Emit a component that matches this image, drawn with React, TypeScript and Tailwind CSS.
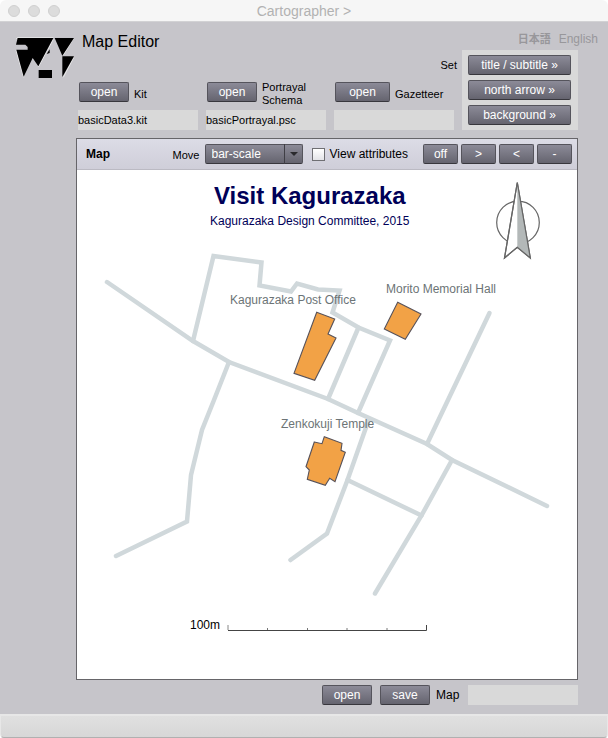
import React from "react";

const ROADS = [
  "M107 282 L193 341 L229 362 L328 399 L358 413 L427 444 L452 460 L547 506",
  "M193 341 L213.5 256 L261.5 262.5 L259.5 285.5 L291 291.5 L297 283.5 L318 289.5 L339.5 290.5 L332.5 312.5 L358.5 327.5 L390 340.5 L358 413",
  "M358.5 327.5 L328 399",
  "M489.5 313 L427 444",
  "M229 362 L214 400 L202 430 L191 475 L187 521.5 L116 556",
  "M369 419 L347.5 480 L327 533.5 L290.5 560",
  "M347.5 480 L421.5 515.5",
  "M452 460 L421.5 515.5 L375 593.5",
];

const BUILDINGS = [
  "316.7,312.3 334.7,319 328,334 336,338 314.7,380.3 294,373.3",
  "397.7,302.3 421,314 405.3,339.3 384.3,329",
  "314.3,442 322,443.7 324.3,436.7 342,443.3 341,450.3 345.3,452.3 335,481.7 329.7,478.3 325.3,485.3 307.3,479.3 309.3,470 306,466.7",
];

function Button({ className = "", children }: { className?: string; children: React.ReactNode }) {
  return (
    <button
      type="button"
      className={`h-5 shrink-0 rounded-xs border border-[#55545c] border-b-[#38373d] bg-linear-to-b from-[#8c8b98] to-[#65646f] text-center text-xs leading-4 text-white ${className}`}
    >
      {children}
    </button>
  );
}

function FileField({ id, label, value, wide }: { id: string; label: React.ReactNode; value: string; wide?: boolean }) {
  return (
    <div>
      <div className="flex h-7 items-start gap-[5px] pl-[1px]">
        <Button className={wide ? "w-[55px]" : "w-[50px]"}>open</Button>
        <label htmlFor={id} className="flex h-[24px] items-center text-[11px] leading-[13px]">
          {label}
        </label>
      </div>
      <input id={id} type="text" defaultValue={value} className="block h-5 w-full bg-[#d9d9d9] text-[11px] outline-none" />
    </div>
  );
}

function Logo() {
  return (
    <svg viewBox="45 112 183 126" className="w-[61px]" role="img" aria-label="Cartographer">
      <path d="M48 118L54 113H160M48 151L71 233M115 202L160 119M221 116L190 166M221 174L190 233" fill="none" stroke="#eee" strokeWidth="2.5" />
      <path d="M53 115H160L115 200L98 175L71 231L49 150H83V142L76 135H48Z" />
      <path d="M164 115H222L187 168ZM187 170H222L187 232ZM116 211H156V235H116ZM140 163L149 149V160Z" />
    </svg>
  );
}

function MapCanvas() {
  return (
    <svg viewBox="77 170 500 509" className="block w-full bg-white" fontFamily="Liberation Sans, Arial, sans-serif">
      <g fill="none" stroke="#d0d8db" strokeWidth="4.5" strokeLinecap="round" strokeLinejoin="miter">
        {ROADS.map((d) => (
          <path key={d} d={d} />
        ))}
      </g>
      <g fill="#f2a246" stroke="#57525a" strokeWidth="1.1">
        {BUILDINGS.map((points) => (
          <polygon key={points} points={points} />
        ))}
      </g>
      <g fill="#6c7476" fontSize="12">
        <text x="230" y="304">Kagurazaka Post Office</text>
        <text x="386" y="293">Morito Memorial Hall</text>
        <text x="281" y="428">Zenkokuji Temple</text>
      </g>
      <g fill="#000058">
        <text x="214" y="204" fontSize="24" fontWeight="bold">Visit Kagurazaka</text>
        <text x="210" y="225" fontSize="12">Kagurazaka Design Committee, 2015</text>
      </g>
      <g stroke="#666" strokeWidth="1.2">
        <circle cx="518" cy="222.5" r="21.3" fill="none" />
        <path d="M517.3 182.5L504.5 258L517.3 247.3L530.3 258Z" fill="#fff" />
        <path d="M517.3 182.5V247.3L530.3 258Z" fill="#b3b8b8" stroke="none" />
        <path d="M517.3 182.5L504.5 258L517.3 247.3L530.3 258Z" fill="none" />
      </g>
      <text x="190" y="629" fontSize="12">100m</text>
      <g fill="none" stroke="#444">
        <path d="M228 630.5H426.5V625" />
        <path d="M228 625V630" stroke="#888" />
        <path d="M267.5 628V630M307.5 628V630M347 628V630M387 628V630" stroke="#777" />
      </g>
    </svg>
  );
}

export default function App() {
  return (
    <div className="flex min-h-screen w-full flex-col bg-white font-['Liberation_Sans',Arial,'Noto_Sans_CJK_JP',sans-serif] text-xs text-black">
      <header className="relative flex h-[22px] items-center justify-center rounded-t-md border-b border-[#d2d2d4] bg-[#f6f6f6]">
        <div className="absolute left-2 flex gap-2">
          <span className="size-3 rounded-full border border-[#d0d0d0] bg-[#dcdcdc]" />
          <span className="size-3 rounded-full border border-[#d0d0d0] bg-[#dcdcdc]" />
          <span className="size-3 rounded-full border border-[#d0d0d0] bg-[#dcdcdc]" />
        </div>
        <h1 className="text-sm text-[#b2b2b2]">Cartographer &gt;</h1>
      </header>

      <div className="flex flex-1 bg-[#c6c5ca]">
        <aside className="w-[76px] shrink-0 pt-[15px] pl-[15px]">
          <Logo />
        </aside>

        <main className="min-w-0 flex-1">
          <div className="flex h-7 justify-between pt-2 pr-[10px] pl-[6px]">
            <h2 className="text-base leading-6">Map Editor</h2>
            <nav className="flex gap-2 leading-[18px] text-[#98979b]">
              <a href="#ja" className="text-[11px] font-bold">日本語</a>
              <a href="#en">English</a>
            </nav>
          </div>

          <div className="flex gap-2 pr-[30px]">
            <div className="flex min-w-0 flex-1 flex-col justify-between pl-[2px]">
              <p className="-mr-[3px] h-[32px] pt-2 text-right text-[11px] leading-[14px]">Set</p>
              <div className="grid grid-cols-3 gap-2">
                <FileField id="kit" label="Kit" value="basicData3.kit" />
                <FileField id="schema" label={<>Portrayal<br />Schema</>} value="basicPortrayal.psc" />
                <FileField id="gazetteer" label="Gazetteer" value="" wide />
              </div>
            </div>
            <div className="flex w-[116px] shrink-0 flex-col gap-[5px] bg-[#d9d9d9] py-[5px] pr-[7px] pl-[6px]">
              <Button>title / subtitle »</Button>
              <Button>north arrow »</Button>
              <Button>background »</Button>
            </div>
          </div>

          <div className="pr-[30px]">
            <section className="mt-2 border border-[#666569]">
              <div className="flex h-[31px] items-center border-b border-[#bbbac3] bg-linear-to-b from-[#dcdce6] to-[#cfced9] pr-[5px] pl-[9px]">
                <h3 className="font-bold">Map</h3>
                <div className="mr-[15px] ml-auto flex items-center">
                  <label htmlFor="move" className="mr-[5px] pt-[2px] text-[11px]">Move</label>
                  <div className="relative">
                    <select
                      id="move"
                      className="block h-5 w-[98px] appearance-none rounded-xs border border-[#55545c] border-b-[#38373d] bg-linear-to-b from-[#8c8b98] to-[#65646f] pl-[6px] text-xs text-white"
                    >
                      <option>bar-scale</option>
                      <option>title</option>
                      <option>north arrow</option>
                    </select>
                    <span className="pointer-events-none absolute inset-y-0 right-0 flex w-[19px] items-center justify-center border-l border-[#3f3e45]">
                      <svg viewBox="0 0 8 4" className="w-2">
                        <path d="M0 0H8L4 4Z" fill="#2a2a2e" />
                      </svg>
                    </span>
                  </div>
                  <input
                    id="attributes"
                    type="checkbox"
                    className="ml-[9px] size-[13px] appearance-none border border-[#6f6f73] bg-linear-to-b from-white to-[#e4e4e8] checked:bg-[#65646f]"
                  />
                  <label htmlFor="attributes" className="ml-[5px]">View attributes</label>
                </div>
                <div className="flex gap-[3px]">
                  <Button className="w-[35px]">off</Button>
                  <Button className="w-[35px]">&gt;</Button>
                  <Button className="w-[35px]">&lt;</Button>
                  <Button className="w-[35px]">-</Button>
                </div>
              </div>
              <MapCanvas />
            </section>

            <div className="flex h-[34px] items-start justify-end pt-[5px]">
              <Button className="w-[50px]">open</Button>
              <Button className="ml-2 w-[50px]">save</Button>
              <label htmlFor="map-file" className="w-[38px] pl-[6px] leading-5">Map</label>
              <input id="map-file" type="text" className="h-5 w-[110px] bg-[#d9d9d9] px-1 outline-none" />
            </div>
          </div>
        </main>
      </div>

      <footer className="h-6 rounded-b-sm border border-t-2 border-[#e7e7e7] border-b-[#b0b0b0] bg-linear-to-b from-[#e0e0e0] to-[#d7d7d7]" />
    </div>
  );
}
